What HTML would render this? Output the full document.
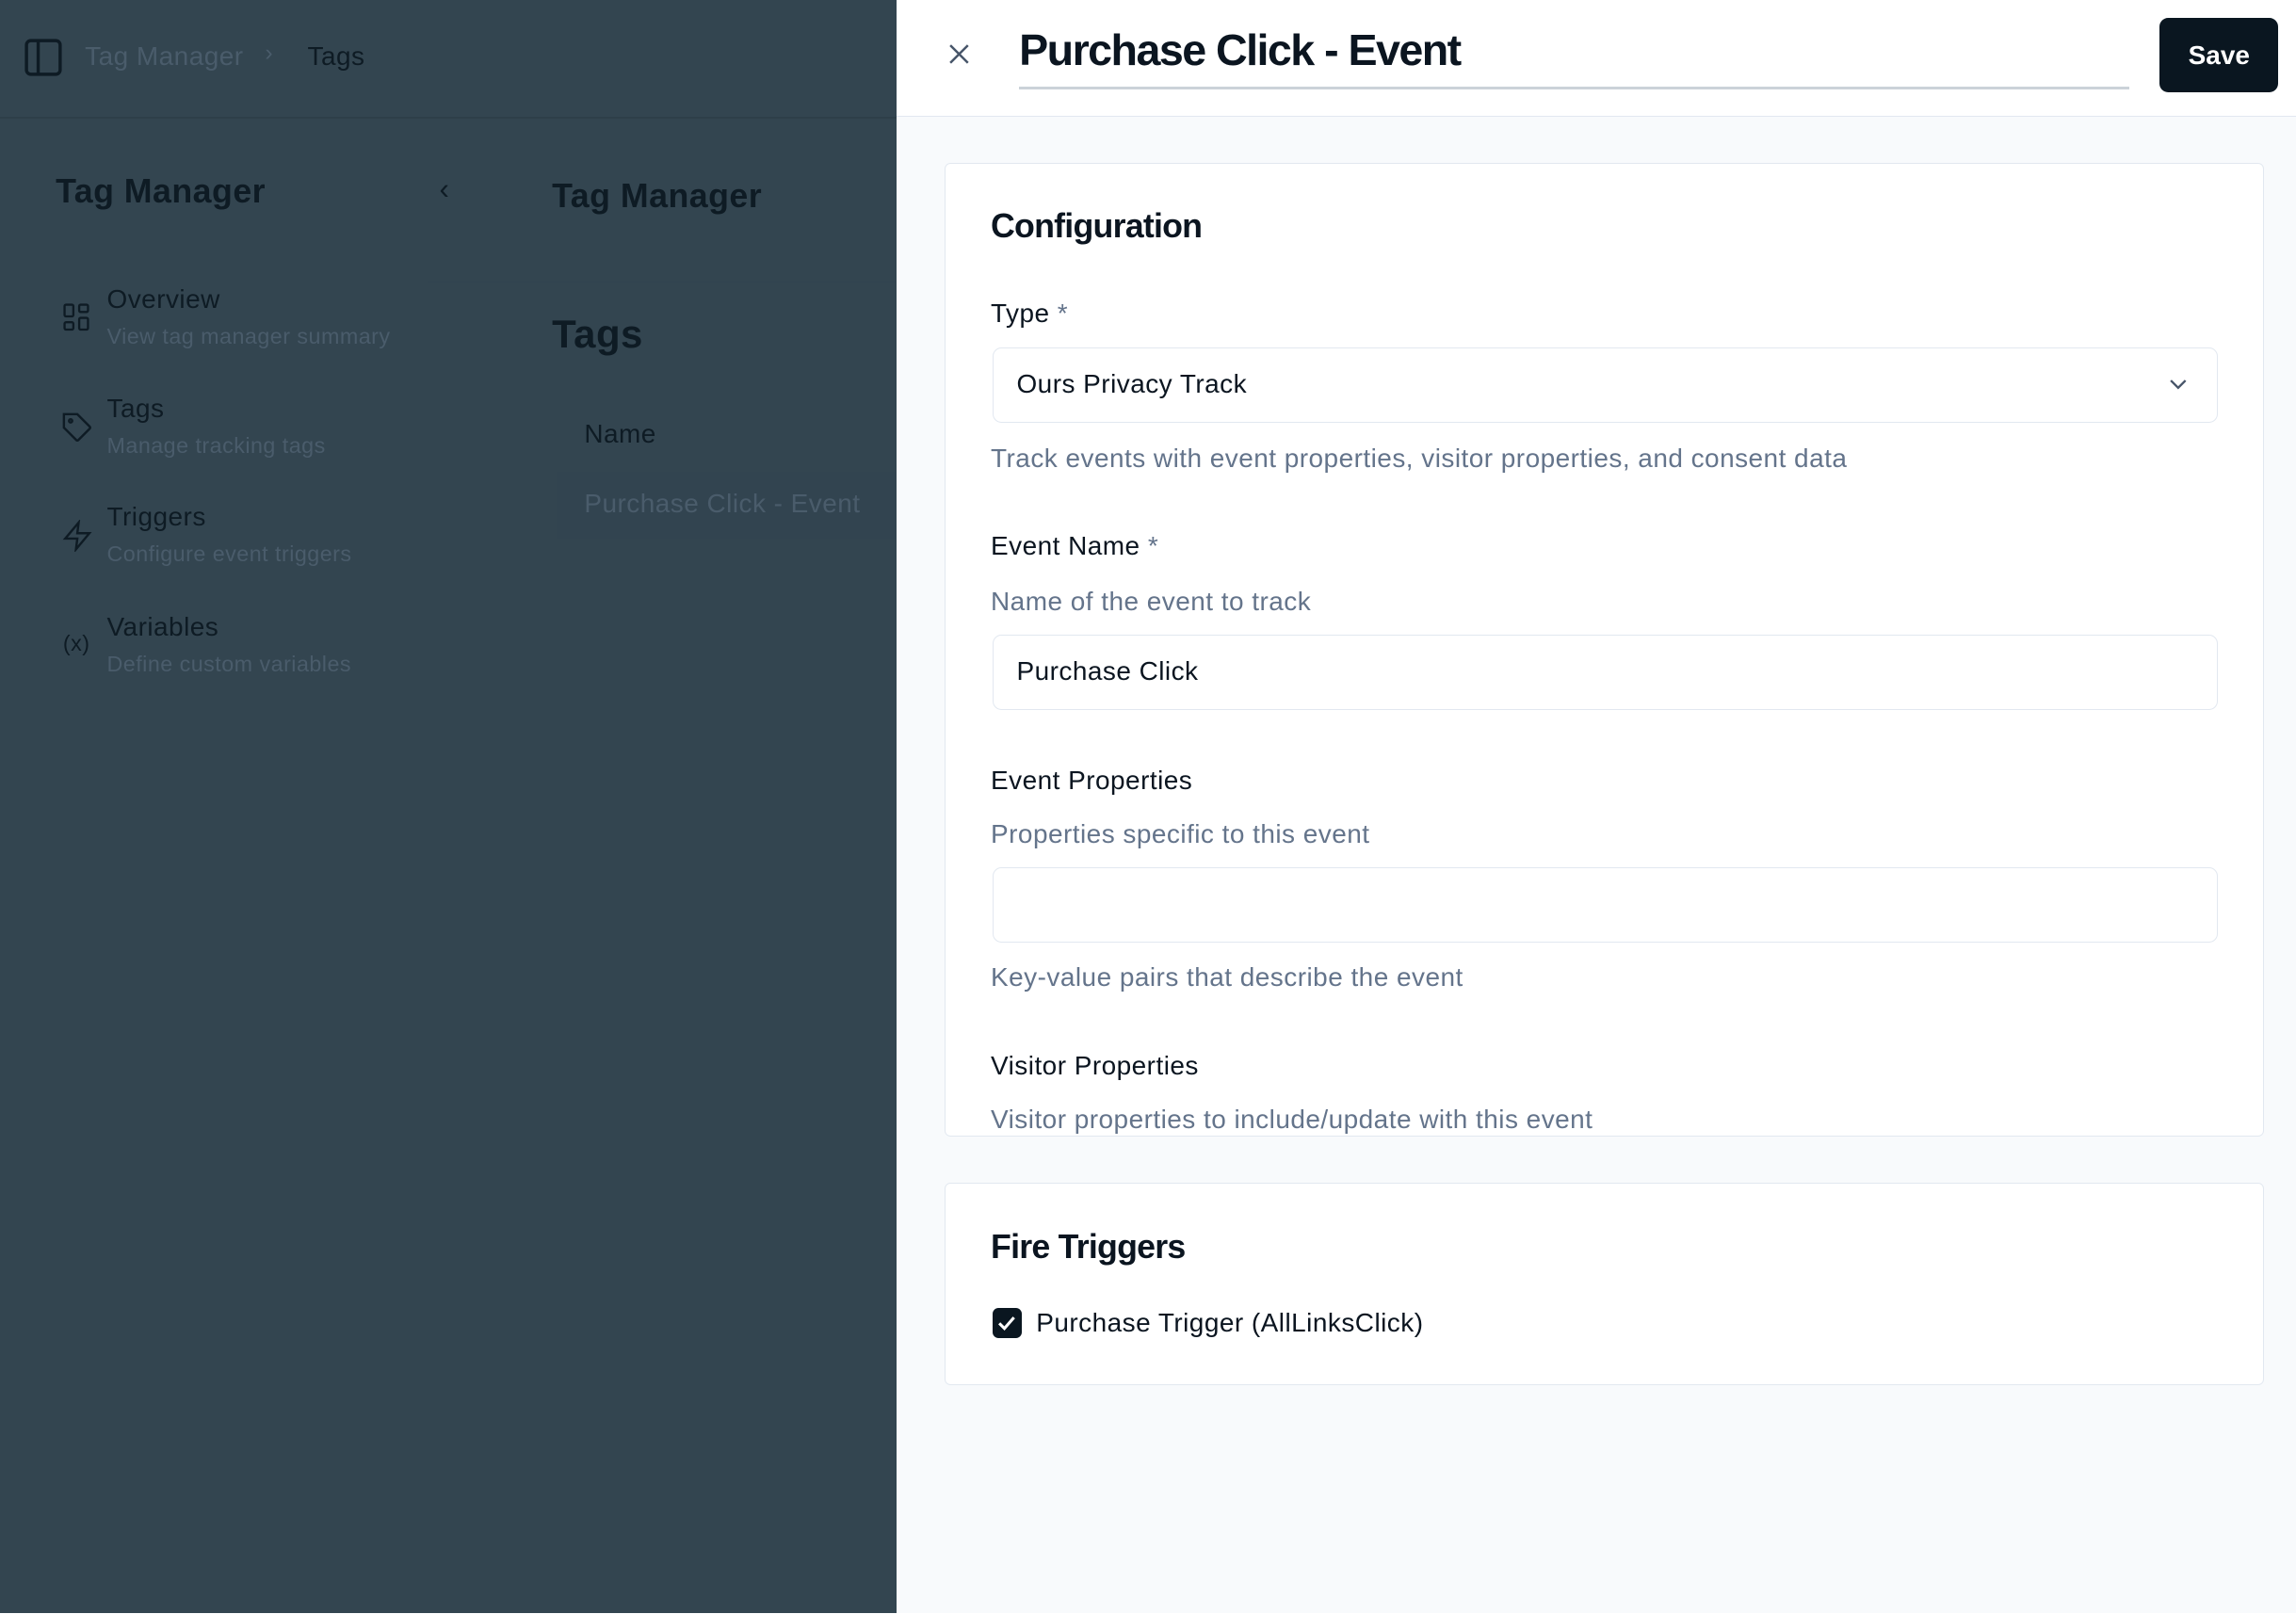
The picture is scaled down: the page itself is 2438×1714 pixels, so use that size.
<!DOCTYPE html>
<html><head><meta charset="utf-8"><style>
*{box-sizing:border-box;margin:0;padding:0}
html,body{width:2438px;height:1714px;overflow:hidden}
body{font-family:"Liberation Sans",sans-serif;}
#root{zoom:1.5548;width:1568px;height:1102px;position:relative;background:#334550;letter-spacing:.3px}
.a{position:absolute;white-space:nowrap}
.dk{color:#0e1b24}
.mu{color:#4a5c6b}
.panel{position:absolute;left:612px;top:0;width:956px;height:1102px;background:#f8fafc}
.ph{position:absolute;left:0;top:0;width:956px;height:80px;background:#fff;border-bottom:1px solid #e2e8f0}
.card{position:absolute;left:33px;width:901px;background:#fff;border:1px solid #e2e8f0;border-radius:4px;overflow:hidden}
.lbl{font-size:18px;color:#0b1520;font-weight:500}
.hint{font-size:18px;color:#64748b}
.inp{position:absolute;left:32px;width:837px;height:51px;border:1px solid #e2e8f0;border-radius:6px;font-size:18px;color:#0b1520;padding:14px 16px}
</style></head><body><div id="root">
<div class="a" style="left:0;top:80px;width:612px;height:1px;background:#2e3f49"></div>
<svg class="a" style="left:16px;top:26px" width="27" height="27" viewBox="0 0 27 27" fill="none" stroke="#0e1b24" stroke-width="2.2"><rect x="2" y="2" width="23" height="23" rx="3"/><line x1="10" y1="2" x2="10" y2="25"/></svg>
<div class="a mu" style="left:58px;top:28px;font-size:18px">Tag Manager</div>
<div class="a mu" style="left:181px;top:27px;font-size:16px">›</div>
<div class="a dk" style="left:210px;top:28px;font-size:18px">Tags</div>
<div class="a dk" style="left:38px;top:118px;font-size:23px;font-weight:bold">Tag Manager</div>
<div class="a dk" style="left:300px;top:118px;font-size:20px">‹</div>
<svg class="a" style="left:43px;top:207px" width="20" height="20" viewBox="0 0 20 20" fill="none" stroke="#0e1b24" stroke-width="1.5"><rect x="1" y="1" width="6" height="8" rx="1"/><rect x="11" y="1" width="6" height="5" rx="1"/><rect x="11" y="10" width="6" height="8" rx="1"/><rect x="1" y="13" width="6" height="5" rx="1"/></svg>
<div class="a dk" style="left:73px;top:194px;font-size:18px">Overview</div>
<div class="a mu" style="left:73px;top:221px;font-size:15px">View tag manager summary</div>
<svg class="a" style="left:42px;top:281px" width="22" height="22" viewBox="0 0 24 24" fill="none" stroke="#0e1b24" stroke-width="1.7"><path d="M12 2H2v10l9.3 9.3a1 1 0 0 0 1.4 0l8.6-8.6a1 1 0 0 0 0-1.4Z"/><circle cx="7" cy="7" r="1.2"/></svg>
<div class="a dk" style="left:73px;top:269px;font-size:18px">Tags</div>
<div class="a mu" style="left:73px;top:296px;font-size:15px">Manage tracking tags</div>
<svg class="a" style="left:42px;top:355px" width="22" height="22" viewBox="0 0 24 24" fill="none" stroke="#0e1b24" stroke-width="1.7"><path d="M13 2 3 14h9l-1 8 10-12h-9l1-8z"/></svg>
<div class="a dk" style="left:73px;top:343px;font-size:18px">Triggers</div>
<div class="a mu" style="left:73px;top:370px;font-size:15px">Configure event triggers</div>
<div class="a dk" style="left:43px;top:431px;font-size:15px">(x)</div>
<div class="a dk" style="left:73px;top:418px;font-size:18px">Variables</div>
<div class="a mu" style="left:73px;top:445px;font-size:15px">Define custom variables</div>
<div class="a dk" style="left:377px;top:121px;font-size:23px;font-weight:bold">Tag Manager</div>
<div class="a" style="left:292px;top:192px;width:320px;height:1px;background:#314350"></div>
<div class="a dk" style="left:377px;top:213px;font-size:27px;font-weight:bold">Tags</div>
<div class="a dk" style="left:399px;top:286px;font-size:18px;font-weight:500">Name</div>
<div class="a" style="left:380px;top:322px;width:232px;height:46px;background:#324450"></div>
<div class="a mu" style="left:399px;top:334px;font-size:18px">Purchase Click - Event</div>
<div class="panel">
 <div class="ph">
  <svg class="a" style="left:35px;top:29px" width="16" height="16" viewBox="0 0 16 16" stroke="#475569" stroke-width="1.6"><path d="M2 2l12 12M14 2 2 14"/></svg>
  <div class="a" style="left:84px;top:17px;font-size:30px;font-weight:bold;color:#0b1520;letter-spacing:-1px">Purchase Click - Event</div>
  <div class="a" style="left:84px;top:59px;width:758px;height:2px;background:#cbd2d9"></div>
  <div class="a" style="left:863px;top:12px;width:81px;height:51px;background:#0a1620;border-radius:6px;color:#fff;font-size:18px;font-weight:bold;text-align:center;line-height:51px;letter-spacing:0">Save</div>
 </div>
 <div class="card" style="top:111px;height:665px">
  <div class="a" style="left:31px;top:30px;font-size:23px;font-weight:bold;color:#0b1520;letter-spacing:-.5px">Configuration</div>
  <div class="a lbl" style="left:31px;top:92px">Type <span style="color:#64748b">*</span></div>
  <div class="inp" style="top:126px">Ours Privacy Track</div>
  <svg class="a" style="left:835px;top:146px" width="14" height="10" viewBox="0 0 14 10" fill="none" stroke="#475569" stroke-width="1.5"><path d="M2 2l5 5 5-5"/></svg>
  <div class="a hint" style="left:31px;top:191px">Track events with event properties, visitor properties, and consent data</div>
  <div class="a lbl" style="left:31px;top:251px">Event Name <span style="color:#64748b">*</span></div>
  <div class="a hint" style="left:31px;top:289px">Name of the event to track</div>
  <div class="inp" style="top:322px">Purchase Click</div>
  <div class="a lbl" style="left:31px;top:411px">Event Properties</div>
  <div class="a hint" style="left:31px;top:448px">Properties specific to this event</div>
  <div class="inp" style="top:481px"></div>
  <div class="a hint" style="left:31px;top:546px">Key-value pairs that describe the event</div>
  <div class="a lbl" style="left:31px;top:606px">Visitor Properties</div>
  <div class="a hint" style="left:31px;top:643px">Visitor properties to include/update with this event</div>
 </div>
 <div class="card" style="top:808px;height:138px">
  <div class="a" style="left:31px;top:30px;font-size:23px;font-weight:bold;color:#0b1520;letter-spacing:-.5px">Fire Triggers</div>
  <div class="a" style="left:32px;top:85px;width:20px;height:20px;background:#0a1620;border-radius:4px"></div>
  <svg class="a" style="left:35px;top:89px" width="14" height="12" viewBox="0 0 14 12" fill="none" stroke="#fff" stroke-width="2"><path d="M2 6l3.5 3.5L12 2"/></svg>
  <div class="a" style="left:62px;top:85px;font-size:18px;color:#0b1520">Purchase Trigger (AllLinksClick)</div>
 </div>
</div>
</div></body></html>
